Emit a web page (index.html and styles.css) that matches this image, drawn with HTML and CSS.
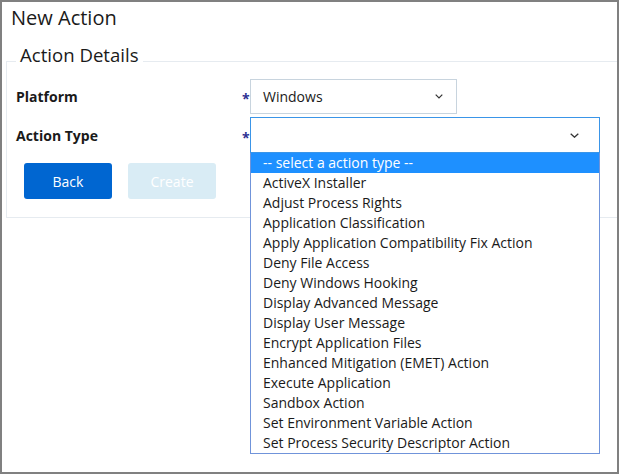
FILE: index.html
```html
<!DOCTYPE html>
<html>
<head>
<meta charset="utf-8">
<link rel="stylesheet" href="styles.css">
</head>
<body>
<div class="window">
  <h1 class="title">New Action</h1>
  <fieldset class="details">
    <legend class="legend">Action Details</legend>
    <div class="row">
      <label class="label">Platform</label>
      <span class="req">*</span>
      <div class="select select-platform">
        <span class="value">Windows</span>
        <svg class="chev" width="8" height="5" viewBox="0 0 8 5"><path d="M0.7 0.7 L4 4 L7.3 0.7" fill="none" stroke="#333" stroke-width="1.2"/></svg>
      </div>
    </div>
    <div class="row">
      <label class="label">Action Type</label>
      <span class="req">*</span>
      <div class="select select-type">
        <span class="value"></span>
        <svg class="chev" width="9" height="5" viewBox="0 0 9 5"><path d="M0.7 0.7 L4.5 4.2 L8.3 0.7" fill="none" stroke="#333" stroke-width="1.3"/></svg>
        <ul class="menu">
          <li class="opt active">-- select a action type --</li>
          <li class="opt">ActiveX Installer</li>
          <li class="opt">Adjust Process Rights</li>
          <li class="opt">Application Classification</li>
          <li class="opt">Apply Application Compatibility Fix Action</li>
          <li class="opt">Deny File Access</li>
          <li class="opt">Deny Windows Hooking</li>
          <li class="opt">Display Advanced Message</li>
          <li class="opt">Display User Message</li>
          <li class="opt">Encrypt Application Files</li>
          <li class="opt">Enhanced Mitigation (EMET) Action</li>
          <li class="opt">Execute Application</li>
          <li class="opt">Sandbox Action</li>
          <li class="opt">Set Environment Variable Action</li>
          <li class="opt">Set Process Security Descriptor Action</li>
        </ul>
      </div>
    </div>
    <div class="buttons">
      <button class="btn btn-primary">Back</button>
      <button class="btn btn-disabled">Create</button>
    </div>
  </fieldset>
</div>
</body>
</html>
```
FILE: styles.css
```css
* { box-sizing: border-box; }
html, body { margin: 0; padding: 0; background: #fff; }
body { font-family: "Open Sans", "Noto Sans", sans-serif; color: #1a1a1a; }

.window {
  width: 619px;
  height: 474px;
  border: 2px solid #808080;
  background: #fff;
  padding: 4px 0 0 4px;
}

.title {
  margin: 0 0 13px 5px;
  font-size: 20px;
  line-height: 24px;
  font-weight: 400;
  color: #1a1a1a;
}

.details {
  margin: 0;
  border: 1px solid #e6ebf0;
  border-right: none;
  padding: 0 0 18px 9px;
  min-width: 0;
}

.legend {
  font-size: 18.6px;
  line-height: 24px;
  padding: 0 4px 12px 4px;
  margin-left: 0;
  color: #1a1a1a;
}

.row {
  display: flex;
  align-items: center;
  margin-bottom: 3px;
  font-size: 14px;
}

.label {
  width: 226px;
  font-weight: 700;
  font-size: 14px;
}

.req {
  width: 8px;
  color: #2e3192;
  font-size: 14px;
  font-weight: 700;
  position: relative;
  top: 2px;
}

.select {
  position: relative;
  height: 35px;
  border: 1px solid #c8d4de;
  display: flex;
  align-items: center;
  justify-content: space-between;
  padding: 0 13px 0 12px;
  font-size: 14px;
}

.select-platform { width: 207px; }
.select-type { width: 350px; height: 36px; border-color: #3a95e8; padding-right: 20px; }

.menu {
  position: absolute;
  top: 35px;
  left: -1px;
  width: 350px;
  margin: 0;
  padding: 0;
  list-style: none;
  border: 1px solid #7094da;
  border-top: none;
  background: #fff;
  z-index: 5;
}

.opt {
  height: 20px;
  line-height: 20px;
  padding-left: 12px;
  font-size: 14px;
  color: #1a1a1a;
  white-space: nowrap;
}

.opt.active { background: #1e90ff; color: #fff; }

.buttons {
  display: flex;
  gap: 16px;
  margin: 10px 0 0 8px;
}

.btn {
  width: 88px;
  height: 36px;
  border: none;
  border-radius: 3px;
  font-family: "Open Sans", "Noto Sans", sans-serif;
  font-size: 14px;
  color: #fff;
}

.btn-primary { background: #0066d1; }
.btn-disabled { background: #d9ecf5; }
```
